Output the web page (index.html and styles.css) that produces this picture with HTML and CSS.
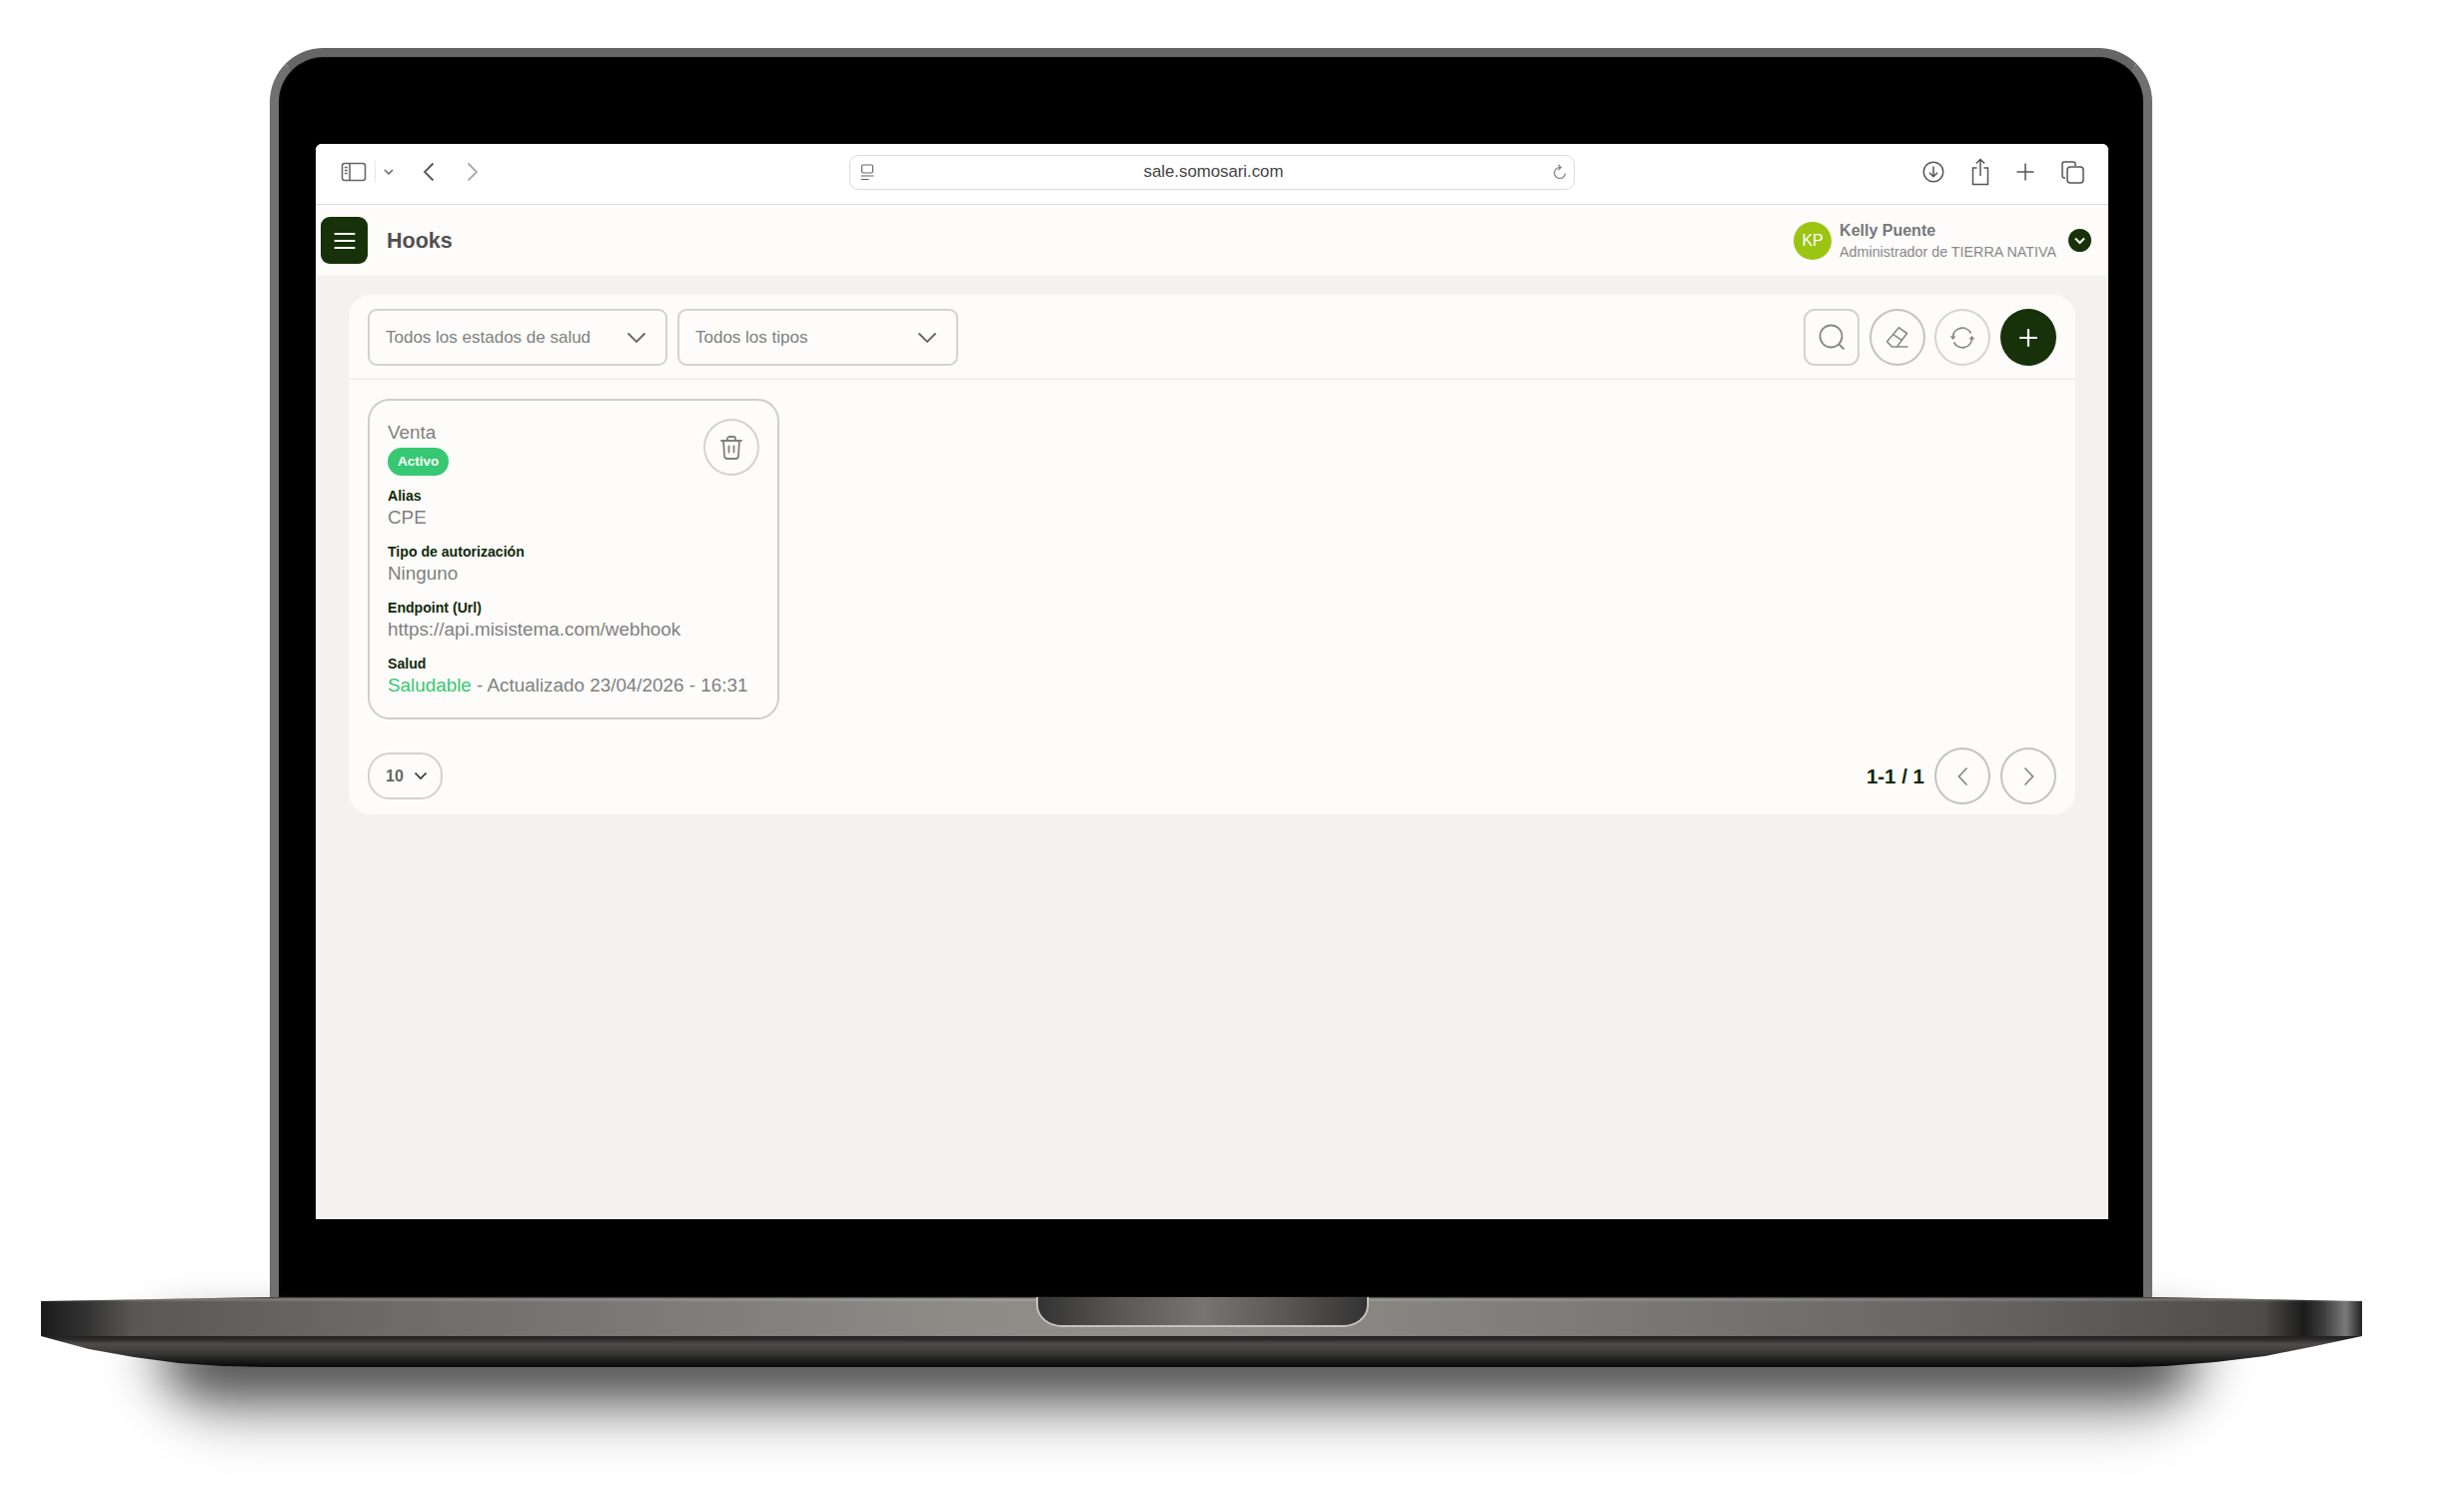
FILE: index.html
```html
<!DOCTYPE html>
<html lang="es">
<head>
    <meta charset="UTF-8">
    <title>Hooks</title>
    <link rel="stylesheet" href="styles.css">
</head>
<body>
    <div class="lid">
        <div class="screen">
            <!-- safari toolbar -->
            <div class="browser-bar">
                <div class="browser-left">
                    <svg class="ic-sidebar" width="26" height="20" viewBox="0 0 26 20" fill="none" stroke="#666" stroke-width="1.6">
                        <rect x="1.5" y="1.5" width="23" height="17" rx="2.5"/>
                        <path d="M9 1.5v17M3.8 5.5h3M3.8 8.5h3M3.8 11.5h3"/>
                    </svg>
                    <span class="browser-sep"></span>
                    <svg class="ic-small-chev" width="10" height="7" viewBox="0 0 10 7" fill="none" stroke="#666" stroke-width="1.5"><path d="M1 1l4 4 4-4"/></svg>
                    <svg class="ic-back" width="12" height="20" viewBox="0 0 12 20" fill="none" stroke="#555" stroke-width="1.8"><path d="M10.5 1.5L2 10l8.500 8.500"/></svg>
                    <svg class="ic-forward" width="12" height="20" viewBox="0 0 12 20" fill="none" stroke="#aaa" stroke-width="1.8"><path d="M1.500 1.500L10 10l-8.500 8.500"/></svg>
                </div>
                <div class="address">
                    <svg width="14" height="17" viewBox="0 0 14 17" fill="none" stroke="#666" stroke-width="1.2">
                        <rect x="1.500" y="1" width="11" height="8" rx="1.500"/>
                        <path d="M0.500 12h13M0.500 15.500h8"/>
                    </svg>
                    <span class="address-url">sale.somosari.com</span>
                    <svg width="14" height="17" viewBox="0 0 14 17" fill="none" stroke="#777" stroke-width="1.2">
                        <path d="M7 3.500a5.500 5.500 0 1 0 5.500 6"/>
                        <path d="M5.500 0.800L8.200 3.500 5.500 6"/>
                    </svg>
                </div>
                <div class="browser-right">
                    <svg width="22" height="22" viewBox="0 0 22 22" fill="none" stroke="#555" stroke-width="1.5">
                        <circle cx="11" cy="11" r="9.800"/>
                        <path d="M11 5.500v10M7 11.800l4 4 4-4"/>
                    </svg>
                    <svg width="18" height="28" viewBox="0 0 18 28" fill="none" stroke="#555" stroke-width="1.5">
                        <path d="M5.500 10H1.500v16.500h15V10h-4"/>
                        <path d="M9 18V1.500M4.800 5.500L9 1.500l4.200 4"/>
                    </svg>
                    <svg width="18" height="18" viewBox="0 0 18 18" fill="none" stroke="#555" stroke-width="1.500"><path d="M9 0.500v17M0.500 9h17"/></svg>
                    <svg width="23" height="23" viewBox="0 0 23 23" fill="none" stroke="#555" stroke-width="1.500">
                        <path d="M4 17H3a2 2 0 0 1-2-2V3a2 2 0 0 1 2-2h9a2 2 0 0 1 2 2v2"/>
                        <rect x="6" y="6" width="16" height="16" rx="3"/>
                    </svg>
                </div>
            </div>

            <!-- app header -->
            <header class="app-header">
                <div class="header-left">
                    <button class="menu-btn">
                        <svg width="22" height="18" viewBox="0 0 22 18" fill="none" stroke="#fff" stroke-width="2.200" stroke-linecap="round"><path d="M1.500 2h19M1.500 9h19M1.500 16h19"/></svg>
                    </button>
                    <h1>Hooks</h1>
                </div>
                <div class="user">
                    <div class="avatar">KP</div>
                    <div class="user-info">
                        <div class="user-name">Kelly Puente</div>
                        <div class="user-role">Administrador de TIERRA NATIVA</div>
                    </div>
                    <div class="user-chevron">
                        <svg width="11" height="8" viewBox="0 0 11 8" fill="none" stroke="#fff" stroke-width="2"><path d="M1 1.500l4.500 4.500L10 1.500"/></svg>
                    </div>
                </div>
            </header>

            <main class="content">
                <section class="panel">
                    <div class="filters">
                        <div class="filter-left">
                            <div class="filter filter-health">
                                <span>Todos los estados de salud</span>
                                <svg width="20" height="12" viewBox="0 0 20 12" fill="none" stroke="#666" stroke-width="1.800"><path d="M1.500 1.500L10 10l8.500-8.500"/></svg>
                            </div>
                            <div class="filter filter-type">
                                <span>Todos los tipos</span>
                                <svg width="20" height="12" viewBox="0 0 20 12" fill="none" stroke="#666" stroke-width="1.800"><path d="M1.500 1.500L10 10l8.500-8.500"/></svg>
                            </div>
                        </div>
                        <div class="filter-actions">
                            <button class="icon-btn square">
                                <svg width="27" height="27" viewBox="0 0 27 27" fill="none" stroke="#888" stroke-width="1.800"><circle cx="12.500" cy="12.500" r="11"/><path d="M20.500 20.500l5 5"/></svg>
                            </button>
                            <button class="icon-btn">
                                <svg width="22" height="21" viewBox="0 0 22 21" fill="none" stroke="#888" stroke-width="1.600" stroke-linejoin="round">
                                    <path d="M12.500 0.800l8 5.700L10.500 20h-5L0.500 14.800z"/>
                                    <path d="M6.700 7.700l9 6M10.500 20h11"/>
                                </svg>
                            </button>
                            <button class="icon-btn light">
                                <svg width="26" height="24" viewBox="0 0 26 24" fill="none" stroke="#888" stroke-width="1.700">
                                    <path d="M3.500 11a9.500 9.500 0 0 1 18-3.500"/>
                                    <path d="M22.500 13a9.500 9.500 0 0 1-18 3.500"/>
                                    <path d="M0.500 10.500h6L3.500 14zM19.500 13.500h6L22.500 10z" fill="#888" stroke="none"/>
                                </svg>
                            </button>
                            <button class="icon-btn primary">
                                <svg width="20" height="20" viewBox="0 0 20 20" fill="none" stroke="#fff" stroke-width="2.200" stroke-linecap="round"><path d="M10 2v16M2 10h16"/></svg>
                            </button>
                        </div>
                    </div>

                    <div class="cards">
                        <article class="hook-card">
                            <button class="icon-btn trash">
                                <svg width="22" height="24" viewBox="0 0 22 24" fill="none" stroke="#808080" stroke-width="1.800" stroke-linecap="round" stroke-linejoin="round">
                                    <path d="M1 5h20M7 5V3a2 2 0 0 1 2-2h4a2 2 0 0 1 2 2v2"/>
                                    <path d="M3 5l1 15a3 3 0 0 0 3 3h8a3 3 0 0 0 3-3l1-15"/>
                                    <path d="M8.500 10.500v6M13.500 10.500v6"/>
                                </svg>
                            </button>
                            <div class="hook-name">Venta</div>
                            <span class="badge">Activo</span>
                            <div class="field first">
                                <div class="field-label">Alias</div>
                                <div class="field-value">CPE</div>
                            </div>
                            <div class="field">
                                <div class="field-label">Tipo de autorización</div>
                                <div class="field-value">Ninguno</div>
                            </div>
                            <div class="field">
                                <div class="field-label">Endpoint (Url)</div>
                                <div class="field-value">https://api.misistema.com/webhook</div>
                            </div>
                            <div class="field">
                                <div class="field-label">Salud</div>
                                <div class="field-value"><span class="healthy">Saludable</span> - Actualizado 23/04/2026 - 16:31</div>
                            </div>
                        </article>
                    </div>

                    <div class="pager">
                        <div class="page-size">
                            <span>10</span>
                            <svg width="14" height="9" viewBox="0 0 14 9" fill="none" stroke="#333" stroke-width="1.700"><path d="M1.500 1.500L7 7l5.500-5.500"/></svg>
                        </div>
                        <div class="pager-right">
                            <span class="page-count">1-1 / 1</span>
                            <button class="icon-btn">
                                <svg width="11" height="20" viewBox="0 0 11 20" fill="none" stroke="#888" stroke-width="1.700"><path d="M9.500 1.500L1.500 10l8 8.500"/></svg>
                            </button>
                            <button class="icon-btn">
                                <svg width="11" height="20" viewBox="0 0 11 20" fill="none" stroke="#888" stroke-width="1.700"><path d="M1.500 1.500l8 8.500-8 8.500"/></svg>
                            </button>
                        </div>
                    </div>
                </section>
            </main>
        </div>
    </div>

    <div class="base">
        <div class="base-band">
            <div class="notch"></div>
        </div>
        <div class="base-lip"></div>
    </div>
</body>
</html>
```

FILE: styles.css
```css
* {
    box-sizing: border-box;
}
body {
    margin: 0;
    height: 1512px;
    overflow: hidden;
    background: #fff;
    font-family: "Liberation Sans", Arial, sans-serif;
    color: #777;
}
button {
    padding: 0;
    font: inherit;
}

/* laptop */
.lid {
    width: 1884px;
    height: 1250px;
    margin: 48px 0 0 270px;
    padding: 87px 35px 78px 37px;
    background: #000;
    border: 9px solid #707070;
    border-top-color: #666;
    border-bottom: 0;
    border-radius: 54px 54px 0 0;
    box-shadow: inset 0 0 3px #222;
}
.screen {
    width: 1794px;
    height: 1076px;
    display: flex;
    flex-direction: column;
    background: #f3f2f0;
    border-radius: 6px 6px 0 0;
    overflow: hidden;
}
.base {
    position: relative;
    width: 2323px;
    margin-left: 41px;
}
.base::before {
    content: "";
    position: absolute;
    z-index: -1;
    left: 119px;
    top: 40px;
    width: 2040px;
    height: 90px;
    background: linear-gradient(#000 20%, rgba(0, 0, 0, 0.55) 55%, rgba(0, 0, 0, 0));
    border-radius: 0 0 160px 160px;
    filter: blur(28px);
}
.base-band {
    height: 39px;
    display: flex;
    justify-content: center;
    padding-left: 2px;
    clip-path: polygon(0 4px, 229px 0, 2113px 0, 100% 4px, 100% 100%, 0 100%);
    background:
        linear-gradient(rgba(40, 40, 40, 0.8), rgba(255, 255, 255, 0.2) 2px, rgba(255, 255, 255, 0) 5px),
        linear-gradient(90deg, #1a1a1a 0, #333 2%, #5a5856 4%, #6e6c6a 15.500%, #8f8c88 40.500%, #928f8b 50%, #6a6664 82%, #4e4c4a 95.800%, #1c1c1c 97.500%, #3a3a3a 98.300%, #7a7a7a 99.300%, #222 100%);
}
.notch {
    width: 333px;
    height: 30px;
    background: linear-gradient(90deg, #333, #5a5856 25%, #767573 50%, #5a5856 75%, #333);
    border: 2px solid #c4c2be;
    border-top: 0;
    border-radius: 0 0 26px 26px / 0 0 22px 22px;
}
.base-lip {
    height: 31px;
    background: linear-gradient(#222 0, #2a2a2a 3px, #514c4a 8px, #3b3836 17px, #0a0a0a 30px);
    clip-path: polygon(0 0, 100% 0, calc(100% - 47px) 10px, calc(100% - 97px) 20px, calc(100% - 147px) 26px, calc(100% - 197px) 30px, calc(100% - 231px) 31px, 227px 31px, 182px 30px, 138px 27px, 93px 21px, 48px 13px);
}

/* safari bar */
.browser-bar {
    height: 61px;
    display: flex;
    align-items: center;
    padding: 0 24px 4px 25px;
    background: #fff;
    border-bottom: 1px solid #dededc;
}
.browser-left {
    width: 509px;
    display: flex;
    align-items: center;
}
.browser-sep {
    width: 1px;
    height: 22px;
    margin-left: 8px;
    background: #e6e6e6;
}
.ic-small-chev {
    margin-left: 8px;
}
.ic-back {
    margin-left: 29px;
}
.ic-forward {
    margin-left: 32px;
}
.address {
    width: 726px;
    height: 35px;
    display: flex;
    align-items: center;
    justify-content: space-between;
    padding: 0 7px 0 10px;
    border: 1px solid #dcdcda;
    border-radius: 9px;
}
.address-url {
    font-size: 16.800px;
    color: #444;
}
.browser-right {
    display: flex;
    align-items: center;
    gap: 27px;
    margin-left: auto;
}

/* app header */
.app-header {
    height: 70px;
    display: flex;
    align-items: center;
    justify-content: space-between;
    padding: 1px 17px 0 5px;
    background: #fdfcfa;
}
.header-left {
    display: flex;
    align-items: center;
    gap: 19px;
}
.menu-btn {
    width: 47px;
    height: 47px;
    display: flex;
    align-items: center;
    justify-content: center;
    background: #17320a;
    border: 0;
    border-radius: 9px;
}
h1 {
    margin: 2px 0 0;
    font-size: 21.500px;
    font-weight: bold;
    color: #505050;
}
.user {
    display: flex;
    align-items: center;
}
.avatar {
    width: 38px;
    height: 38px;
    display: flex;
    align-items: center;
    justify-content: center;
    margin-right: 8px;
    background: #9cc412;
    border-radius: 50%;
    color: #fff;
    font-size: 16px;
}
.user-name {
    font-size: 16px;
    font-weight: bold;
    line-height: 20px;
    color: #777;
}
.user-role {
    margin-top: 2px;
    font-size: 14.300px;
    line-height: 18px;
    color: #888;
}
.user-chevron {
    width: 23px;
    height: 23px;
    display: flex;
    align-items: center;
    justify-content: center;
    margin-left: 12px;
    background: #17320a;
    border-radius: 50%;
}

/* content */
.content {
    padding: 20px 33px 0;
}
.panel {
    height: 520px;
    background: #fdfcfa;
    border-radius: 22px;
}
.filters {
    height: 85px;
    display: flex;
    justify-content: space-between;
    padding: 14px 19px 0;
    border-bottom: 2px solid #f1f0ee;
}
.filter-left {
    display: flex;
    gap: 10px;
}
.filter-actions {
    display: flex;
    gap: 9.670px;
}
.filter {
    height: 57px;
    display: flex;
    align-items: center;
    justify-content: space-between;
    padding: 0 19px 0 16px;
    border: 2px solid #d3d2cf;
    border-radius: 9px;
    font-size: 17px;
    color: #808080;
}
.filter-health {
    width: 300px;
}
.filter-type {
    width: 281px;
}
.icon-btn {
    width: 56px;
    height: 57px;
    display: flex;
    align-items: center;
    justify-content: center;
    flex: none;
    background: transparent;
    border: 2px solid #c4c3c0;
    border-radius: 50%;
}
.icon-btn.square {
    border-color: #d3d2cf;
    border-radius: 11px;
}
.icon-btn.light {
    border-color: #d6d5d2;
}
.icon-btn.primary {
    background: #17320a;
    border-color: #17320a;
}
.cards {
    display: grid;
    grid-template-columns: repeat(auto-fill, 412px);
    padding: 19px 19px 0;
}
.hook-card {
    position: relative;
    height: 321px;
    padding: 19px 18px 0;
    border: 2px solid #cfcecb;
    border-radius: 22px;
}
.icon-btn.trash {
    position: absolute;
    top: 18px;
    right: 18px;
    border-color: #d3d2cf;
}
.hook-name {
    font-size: 18.850px;
    line-height: 26px;
    color: #808080;
}
.badge {
    display: inline-block;
    height: 28px;
    margin-top: 2px;
    padding: 0 10px;
    background: #36c872;
    border-radius: 14px;
    font-size: 13.500px;
    font-weight: bold;
    line-height: 28px;
    color: #fff;
}
.field {
    margin-top: 12px;
}
.field.first {
    margin-top: 11px;
}
.field-label {
    font-size: 14.100px;
    font-weight: bold;
    line-height: 18px;
    color: #10280a;
}
.field-value {
    font-size: 18.850px;
    line-height: 26px;
    color: #808080;
}
.healthy {
    color: #36c872;
}
.pager {
    display: flex;
    align-items: center;
    justify-content: space-between;
    padding: 28px 19px 0;
}
.page-size {
    width: 75px;
    height: 47px;
    display: flex;
    align-items: center;
    gap: 10px;
    padding-left: 16px;
    border: 2px solid #d3d2cf;
    border-radius: 22px;
    font-size: 16px;
    font-weight: bold;
    color: #666;
}
.pager-right {
    display: flex;
    align-items: center;
    gap: 10px;
}
.page-count {
    font-size: 20.500px;
    font-weight: bold;
    color: #10280a;
}
```
